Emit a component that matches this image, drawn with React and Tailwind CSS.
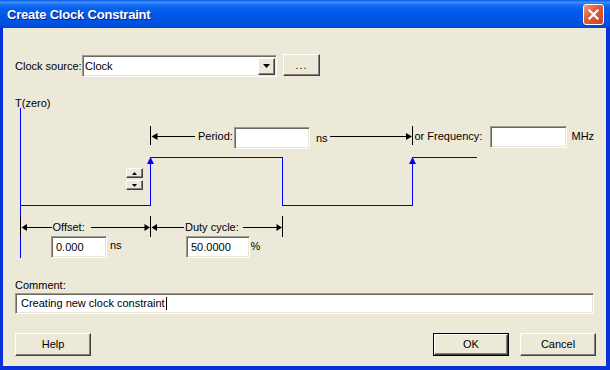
const field =
  "bg-white border border-t-[#9c9a8f] border-l-[#9c9a8f] border-b-white border-r-white shadow-[inset_1px_1px_0_#6b6960,inset_-1px_-1px_0_#e8e6da]";
const raised =
  "bg-[#ece9d8] border border-t-white border-l-white border-b-[#404040] border-r-[#404040] shadow-[inset_-1px_-1px_0_#808080]";

function Label({ x, y, children }) {
  return (
    <span className="absolute whitespace-nowrap" style={{ left: x, top: y }}>
      {children}
    </span>
  );
}

function Field({ x, y, w, h = 22, children }) {
  return (
    <div
      className={`absolute flex items-center pl-[4px] ${field}`}
      style={{ left: x, top: y, width: w, height: h }}
    >
      {children}
    </div>
  );
}

function Diagram() {
  const bars = [
    [147.5, 31, 50],
    [409.5, 31, 50],
    [17.5, 121, 142],
    [147.5, 121, 142],
    [279.5, 121, 142],
  ];
  return (
    <div className="relative h-[167px] shrink-0">
      <svg className="absolute left-0 top-0" width="603" height="167" viewBox="0 0 603 167">
        <g stroke="#0000ff" strokeWidth="1" fill="none" shapeRendering="crispEdges">
          <path d="M17.5 13 V163" />
          <path d="M17.5 110.5 H147.5 V62.5 H279.5 V110.5 H409.5 V62.5 H474" />
        </g>
        <g fill="#0000ff">
          <polygon points="147.5,62 144,69 151,69" />
          <polygon points="409.5,62 406,69 413,69" />
        </g>
        <g stroke="#000" strokeWidth="1" fill="none" shapeRendering="crispEdges">
          {bars.map(([x, a, b], i) => (
            <path key={i} d={`M${x} ${a} V${b}`} />
          ))}
          <path d="M154 41.5 H192" />
          <path d="M327 41.5 H404" />
          <path d="M23 132.5 H49" />
          <path d="M88 132.5 H142" />
          <path d="M153 132.5 H181" />
          <path d="M240 132.5 H274" />
        </g>
        <g fill="#000">
          <polygon points="148.5,41.5 154.5,38 154.5,45" />
          <polygon points="409,41.5 403,38 403,45" />
          <polygon points="18.5,132.5 24,129 24,136" />
          <polygon points="147,132.5 141.5,129 141.5,136" />
          <polygon points="148.5,132.5 154,129 154,136" />
          <polygon points="279,132.5 273.5,129 273.5,136" />
        </g>
      </svg>

      <Label x={12} y={2}>T(zero)</Label>

      <Label x={195} y={35}>Period:</Label>
      <Field x={231} y={32} w={76} />
      <Label x={313} y={37}>ns</Label>
      <Label x={411.5} y={35}>or Frequency:</Label>
      <Field x={487} y={31} w={77} />
      <Label x={568.5} y={35}>MHz</Label>

      <div className={`absolute left-[123px] top-[73px] w-[17px] h-[10px] flex items-center justify-center ${raised}`}>
        <svg width="5" height="3" viewBox="0 0 5 3">
          <polygon points="2.5,0 5,3 0,3" fill="#000" />
        </svg>
      </div>
      <div className={`absolute left-[123px] top-[85px] w-[17px] h-[10px] flex items-center justify-center ${raised}`}>
        <svg width="5" height="3" viewBox="0 0 5 3">
          <polygon points="0,0 5,0 2.5,3" fill="#000" />
        </svg>
      </div>

      <Label x={49.5} y={126}>Offset:</Label>
      <Label x={182} y={126}>Duty cycle:</Label>
      <Field x={48} y={141} w={56}>0.000</Field>
      <Label x={107} y={144}>ns</Label>
      <Field x={183} y={141} w={64}>50.0000</Field>
      <Label x={247.5} y={145}>%</Label>
    </div>
  );
}

export default function App() {
  return (
    <div className="w-[610px] h-[370px] flex flex-col font-['Liberation_Sans',Arial,sans-serif] text-[11px] leading-[13px] text-black select-none">
      <div className="h-[28px] shrink-0 flex items-center justify-between pl-[7px] pr-[6px] bg-[linear-gradient(to_bottom,#0a5ae8_0%,#3d92fb_8%,#1c70f3_16%,#0461ee_30%,#0056e6_60%,#0052e0_85%,#0046d0_100%)]">
        <span className="text-white font-bold text-[13px] leading-[16px] tracking-[-0.2px] pt-[1px] [text-shadow:1px_1px_0_#0b2480]">
          Create Clock Constraint
        </span>
        <div className="w-[21px] h-[21px] rounded-[3px] border border-white bg-[linear-gradient(135deg,#f29a80_0%,#e35e38_40%,#cc4420_100%)] flex items-center justify-center">
          <svg width="11" height="11" viewBox="0 0 11 11">
            <path d="M1.5 1.5 L9.5 9.5 M9.5 1.5 L1.5 9.5" stroke="#fff" strokeWidth="2.2" strokeLinecap="square" />
          </svg>
        </div>
      </div>

      <div className="flex-1 flex flex-col bg-[#ece9d8] border-l-[3px] border-r-[4px] border-b-[4px] border-[#0831d9]">
        <div className="flex items-start pl-[12px] mt-[26px] h-[23px] shrink-0">
          <span className="w-[67px] whitespace-nowrap self-center pt-[1px]">Clock source:</span>
          <div className={`mt-[1px] w-[195px] h-[22px] flex items-center pl-[2px] ${field}`}>
            <span>Clock</span>
            <div className={`ml-auto mr-[1px] w-[17px] h-[17px] flex items-center justify-center ${raised}`}>
              <svg width="7" height="4" viewBox="0 0 7 4">
                <polygon points="0,0 7,0 3.5,4" fill="#000" />
              </svg>
            </div>
          </div>
          <div className={`ml-[6px] w-[37px] h-[22px] flex items-center justify-center tracking-[1px] ${raised}`}>
            ...
          </div>
        </div>

        <div className="mt-[18px]">
          <Diagram />
        </div>

        <div className="pl-[12px] mt-[17px]">Comment:</div>
        <div className={`ml-[12px] mt-[1px] w-[579px] h-[21px] shrink-0 flex items-center pl-[5px] ${field}`}>
          <span>Creating new clock constraint</span>
          <span className="inline-block w-[1px] h-[13px] bg-black ml-[1px]" />
        </div>

        <div className="flex mt-[19px] h-[23px] pl-[12px] pr-[10px] shrink-0">
          <div className={`w-[76px] h-[23px] flex items-center justify-center ${raised}`}>Help</div>
          <div className="ml-auto w-[76px] h-[23px] border border-black">
            <div className={`w-full h-full flex items-center justify-center ${raised}`}>OK</div>
          </div>
          <div className={`ml-[11px] w-[76px] h-[23px] flex items-center justify-center ${raised}`}>Cancel</div>
        </div>
      </div>
    </div>
  );
}
